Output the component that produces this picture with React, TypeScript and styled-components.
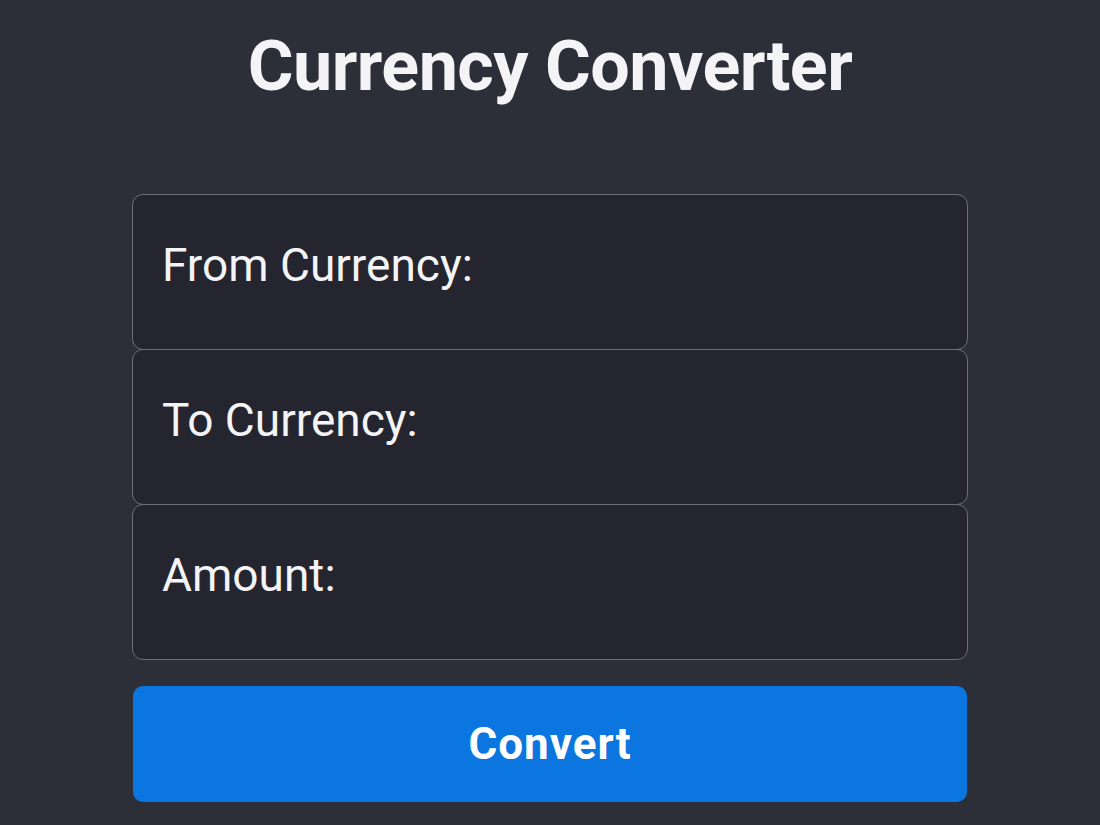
import React, { FC } from 'react'
import styled, { createGlobalStyle } from 'styled-components'

const GlobalStyle = createGlobalStyle`
	html, body {
		margin: 0;
		padding: 0;
		background: #2d2f38;
	}
	body {
		font-family: Roboto, "Liberation Sans", sans-serif;
		color: #f4f4f6;
	}
`

const fields = ['From Currency:', 'To Currency:', 'Amount:']

const App: FC = () => {
	return (
		<>
			<GlobalStyle />
			<Page>
				<Title>Currency Converter</Title>
				<Form>
					<Fields>
						{fields.map(label => (
							<Field key={label}>
								<Label>{label}</Label>
							</Field>
						))}
					</Fields>
					<ConvertButton type="button">Convert</ConvertButton>
				</Form>
			</Page>
		</>
	)
}

export default App

const Page = styled.main`
	width: 1100px;
	height: 825px;
	overflow: hidden;
	display: flex;
	flex-direction: column;
	align-items: center;
	box-sizing: border-box;
	padding-top: 24px;
`

const Title = styled.h1`
	margin: 0;
	font-size: 70px;
	font-weight: 700;
	line-height: 84px;
	color: #f4f4f7;
	letter-spacing: -0.5px;
`

const Form = styled.form`
	margin-top: 86px;
	width: 836px;
	display: flex;
	flex-direction: column;
	gap: 26px;
`

const Fields = styled.div`
	display: flex;
	flex-direction: column;
`

const Field = styled.div`
	height: 156px;
	box-sizing: border-box;
	border: 1.5px solid #6d6f78;
	border-radius: 11px;
	background: #24252e;
	padding: 0 29px;
	display: flex;
	align-items: flex-start;
	& + & {
		margin-top: -1px;
	}
`

const Label = styled.label`
	margin-top: 43px;
	font-size: 46px;
	line-height: 54px;
	font-weight: 400;
	color: #f4f4f7;
`

const ConvertButton = styled.button`
	height: 116px;
	margin: 0 1px;
	border: none;
	border-radius: 10px;
	background: #0c76e0;
	color: #ffffff;
	font-family: Roboto, "Liberation Sans", sans-serif;
	font-size: 44px;
	font-weight: 700;
	letter-spacing: 1px;
	cursor: pointer;
`
